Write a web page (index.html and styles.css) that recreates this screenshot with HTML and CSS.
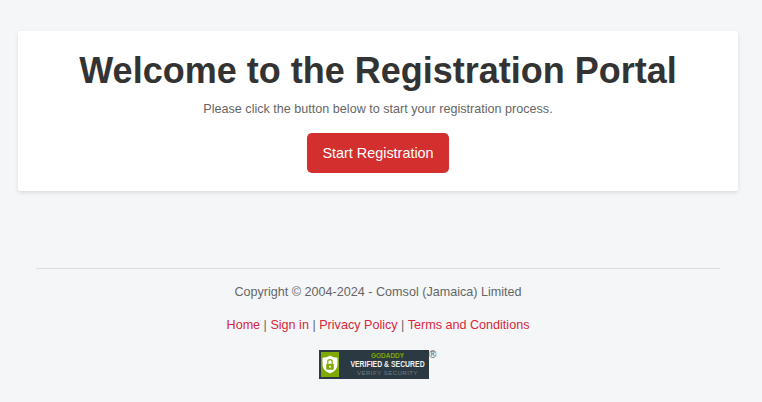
FILE: index.html
```html
<!DOCTYPE html>
<html lang="en">
<head>
<meta charset="utf-8">
<title>Registration Portal</title>
<link rel="stylesheet" href="styles.css">
</head>
<body>
<main class="card">
  <h1 class="title">Welcome to the Registration Portal</h1>
  <p class="lead">Please click the button below to start your registration process.</p>
  <a class="btn" href="#">Start Registration</a>
</main>
<footer class="footer">
  <p class="copy">Copyright © 2004-2024 - Comsol (Jamaica) Limited</p>
  <p class="links"><a href="#">Home</a> | <a href="#">Sign in</a> | <a href="#">Privacy Policy</a> | <a href="#">Terms and Conditions</a></p>
  <div class="seal-wrap">
    <div class="seal">
      <span class="seal-icon">
        <svg viewBox="0 0 24 26" aria-hidden="true">
          <path d="M12 1 C15 3 19 4 22 4 V13 C22 19 17 23 12 25 C7 23 2 19 2 13 V4 C5 4 9 3 12 1 Z" fill="#fff"/>
          <rect x="7" y="12" width="10" height="8" rx="1" fill="#7fa800"/>
          <path d="M9 12 V9.5 a3 3 0 0 1 6 0 V12" fill="none" stroke="#7fa800" stroke-width="1.6"/>
          <circle cx="12" cy="16" r="1.3" fill="#fff"/>
        </svg>
      </span>
      <span class="seal-text">
        <span class="seal-top">GODADDY</span>
        <span class="seal-main">VERIFIED &amp; SECURED</span>
        <span class="seal-sub">VERIFY SECURITY</span>
      </span>
    </div>
    <span class="reg">®</span>
  </div>
</footer>
</body>
</html>
```
FILE: styles.css
```css
* { box-sizing: border-box; }
html, body { margin: 0; padding: 0; }
body {
  background: #f5f6f8;
  font-family: "Liberation Sans", Arial, sans-serif;
  color: #666;
  height: 402px;
  overflow: hidden;
  padding: 31px 24px 0 18px;
}
.card {
  background: #fff;
  height: 160px;
  padding-top: 17px;
  text-align: center;
  box-shadow: 0 2px 4px rgba(0, 0, 0, 0.1);
  border-radius: 2px;
}
.title {
  margin: 0;
  font-size: 36px;
  line-height: 46px;
  font-weight: 700;
  color: #333;
}
.lead {
  margin: 7px 0 0;
  font-size: 12.6px;
  line-height: 16px;
  color: #666;
}
.btn {
  display: inline-block;
  margin-top: 16px;
  padding: 0 15px;
  height: 40px;
  line-height: 40px;
  background: #d32f2f;
  color: #fff;
  font-size: 14.4px;
  text-decoration: none;
  border-radius: 5px;
}
.footer {
  margin: 77px 0 0 18px;
  width: 684px;
  border-top: 1px solid #ddd;
  text-align: center;
  font-size: 12.6px;
}
.copy {
  margin: 15px 0 0;
  line-height: 16px;
}
.links {
  margin: 17px 0 0;
  line-height: 16px;
}
.links a {
  color: #d92638;
  text-decoration: none;
}
.seal-wrap {
  position: relative;
  width: 118px;
  height: 29px;
  margin: 17px auto 0;
}
.seal {
  display: flex;
  width: 110px;
  height: 29px;
  background: #2b3a42;
}
.seal-icon {
  display: flex;
  align-items: center;
  justify-content: center;
  width: 25px;
  height: 25px;
  margin: 2px 0 0 2px;
  background: #7fa800;
}
.seal-icon svg { width: 18px; height: 21px; }
.seal-text {
  flex: 1;
  display: flex;
  flex-direction: column;
  align-items: center;
  white-space: nowrap;
}
.seal-top {
  font-size: 6.5px;
  line-height: 7px;
  margin-top: 2px;
  font-weight: 700;
  color: #7fa800;
}
.seal-main {
  font-size: 9px;
  line-height: 11px;
  font-weight: 700;
  color: #f0f0f0;
  transform: scaleX(0.765);
}
.seal-sub {
  font-size: 6px;
  line-height: 7px;
  color: #6f7f88;
  letter-spacing: 0.5px;
}
.reg {
  position: absolute;
  left: 110px;
  top: 1px;
  font-size: 10px;
  line-height: 8px;
  color: #555;
}
```
